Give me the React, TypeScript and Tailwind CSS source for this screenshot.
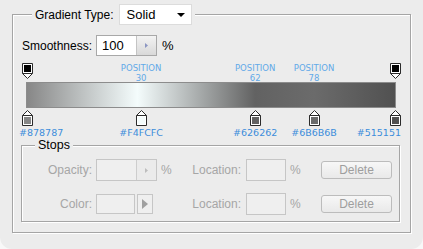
import React from "react";

type Stop = {
    color: string;
    pos: number;
    at: number;
    align: "start" | "center" | "end";
};

const STOPS: Stop[] = [
    { color: "#878787", pos: 0, at: 0, align: "start" },
    { color: "#F4FCFC", pos: 30, at: 31, align: "center" },
    { color: "#626262", pos: 62, at: 62, align: "center" },
    { color: "#6B6B6B", pos: 78, at: 78, align: "center" },
    { color: "#515151", pos: 100, at: 100, align: "end" },
];

const OPACITY_STOPS = [0, 100];

function TopMarker() {
    return (
        <svg width="11" height="16" viewBox="0 0 11 16">
            <path d="M0.5 0.5H10.5V10.5L5.5 15.5L0.5 10.5Z" fill="#fff" stroke="#2b2b2b" />
            <path d="M0.5 10.5H10.5" stroke="#2b2b2b" />
            <rect x="2" y="2" width="7" height="7" fill="#000" />
        </svg>
    );
}

function BottomMarker({ color }: { color: string }) {
    return (
        <svg width="11" height="16" viewBox="0 0 11 16">
            <path d="M5.5 0.5L10.5 5.5V15.5H0.5V5.5Z" fill="#fff" stroke="#2b2b2b" />
            <path d="M0.5 5.5H10.5" stroke="#2b2b2b" />
            <rect x="2" y="7" width="7" height="7" fill={color} />
        </svg>
    );
}

function labelStyle(stop: Stop): React.CSSProperties {
    if (stop.align === "start") return { left: "-8px" };
    if (stop.align === "end") return { right: "-6px" };
    return { left: `${stop.at}%`, transform: "translateX(-50%)" };
}

function GradientEditor() {
    const gradient = `linear-gradient(to right, ${STOPS.map(s => `${s.color} ${s.pos}%`).join(", ")})`;
    return (
        <div className="mt-[5px] ml-[13px] w-[370px] flex flex-col">
            {/* opacity stops + position labels */}
            <div className="relative h-[21px] mx-[1px]">
                {OPACITY_STOPS.map(at => (
                    <div key={at} className="absolute top-[2px]" style={{ left: `calc(${at}% - 5px)` }}>
                        <TopMarker />
                    </div>
                ))}
                {STOPS.filter(s => s.align === "center").map(s => (
                    <div
                        key={s.pos}
                        className="absolute top-[2px] flex flex-col items-center font-['DejaVu_Sans',sans-serif] text-[8.5px] leading-[10px] text-[#62a9e8]"
                        style={{ left: `${s.at}%`, transform: "translateX(-50%)" }}
                    >
                        <span>POSITION</span>
                        <span>{s.pos}</span>
                    </div>
                ))}
            </div>

            <div className="h-[26px] border border-[#8c8c8c]" style={{ background: gradient }} />

            {/* color stops */}
            <div className="relative h-[19px] mx-[1px]">
                {STOPS.map(s => (
                    <div key={s.pos} className="absolute top-[2px]" style={{ left: `calc(${s.at}% - 5px)` }}>
                        <BottomMarker color={s.color} />
                    </div>
                ))}
            </div>
            <div className="relative h-[11px] mx-[1px]">
                {STOPS.map(s => (
                    <span
                        key={s.pos}
                        className="absolute top-0 font-['DejaVu_Sans',sans-serif] text-[9.5px] leading-[11px] text-[#3c8cdb] whitespace-nowrap"
                        style={labelStyle(s)}
                    >
                        {s.color}
                    </span>
                ))}
            </div>
        </div>
    );
}

function DisabledInput({ stepper }: { stepper?: boolean }) {
    return (
        <div className="flex h-[22px] w-[61px] border border-[#c6c6c6] bg-[#efefef]">
            <div className="flex-1" />
            {stepper && (
                <div className="w-[20px] border-l border-[#cdcdcd] bg-[#ebebeb] flex items-center justify-center">
                    <svg width="3" height="5" viewBox="0 0 3 5"><path d="M0 0L3 2.5L0 5Z" fill="#bdbdbd" /></svg>
                </div>
            )}
        </div>
    );
}

function LocationGroup() {
    return (
        <>
            <span className="w-[56px] text-right">Location:</span>
            <div className="ml-[5px] h-[22px] w-[40px] border border-[#c6c6c6] bg-[#efefef]" />
            <span className="ml-[4px] w-[31px]">%</span>
            <button className="h-[18px] w-[71px] rounded-[3px] border border-[#bcbcbc] bg-gradient-to-b from-[#f7f7f7] to-[#e9e9e9] text-[12px] leading-[16px] text-[#9e9e9e]">
                Delete
            </button>
        </>
    );
}

function StopsBox() {
    return (
        <div className="mt-[7px] ml-[8px] w-[379px] border border-[#a5a5a5] shadow-[inset_1px_1px_0_#fff,1px_1px_0_#fff] pb-[7px]">
            <div className="-mt-[8px] ml-[13px] w-fit px-[3px] bg-[#ececec] h-[14px] leading-[14px] text-[12.5px] text-black">
                Stops
            </div>
            <div className="mt-[7px] flex items-center h-[22px] text-[12px] text-[#a6a6a6]">
                <span className="w-[70px] text-right">Opacity:</span>
                <div className="ml-[4px]"><DisabledInput stepper /></div>
                <span className="ml-[4px] w-[24px]">%</span>
                <LocationGroup />
            </div>
            <div className="mt-[12px] flex items-center h-[21px] text-[12px] text-[#a6a6a6]">
                <span className="w-[70px] text-right">Color:</span>
                <div className="ml-[4px] h-[20px] w-[39px] border border-[#c6c6c6] bg-[#efefef]" />
                <div className="ml-[2px] h-[20px] w-[16px] border border-[#c6c6c6] bg-[#efefef] flex items-center justify-center">
                    <svg width="6" height="10" viewBox="0 0 6 10"><path d="M0 0L6 5L0 10Z" fill="#a0a0a0" /></svg>
                </div>
                <span className="w-[32px]" />
                <LocationGroup />
            </div>
        </div>
    );
}

export default function App() {
    return (
        <div className="w-[423px] h-[249px] bg-[#f8f8f8]">
            <div className="w-[423px] h-[249px] bg-[#ececec] rounded-b-[12px] pt-[14px] pl-[12px] font-['Liberation_Sans',Arial,sans-serif] text-[12px] text-black">
                <div className="w-[399px] h-[219px] border border-[#a5a5a5] shadow-[inset_1px_1px_0_#fff,1px_1px_0_#fff]">
                    {/* legend */}
                    <div className="-mt-[11px] ml-[19px] w-fit px-[3px] bg-[#ececec] flex items-center h-[21px]">
                        <span>Gradient Type:</span>
                        <div className="ml-[5px] h-[21px] w-[73px] bg-white border border-[#dcdcdc] flex items-center pl-[7px] pr-[6px]">
                            <span className="flex-1 text-[13px]">Solid</span>
                            <svg width="8" height="4" viewBox="0 0 8 4"><path d="M0 0H8L4 4Z" fill="#000" /></svg>
                        </div>
                    </div>

                    {/* smoothness */}
                    <div className="mt-[10px] ml-[9px] flex items-center h-[21px]">
                        <span className="w-[74px]">Smoothness:</span>
                        <div className="flex h-[21px] w-[61px] border border-[#a8a8a8] bg-white">
                            <span className="flex-1 pl-[5px] text-[13px] leading-[19px]">100</span>
                            <div className="w-[20px] border-l border-[#c4c4c4] bg-gradient-to-b from-[#f3f3f3] to-[#d9d9d9] flex items-center justify-center">
                                <svg width="3" height="5" viewBox="0 0 3 5"><path d="M0 0L3 2.5L0 5Z" fill="#8c96c2" /></svg>
                            </div>
                        </div>
                        <span className="ml-[5px] text-[13px]">%</span>
                    </div>

                    <GradientEditor />
                    <StopsBox />
                </div>
            </div>
        </div>
    );
}
